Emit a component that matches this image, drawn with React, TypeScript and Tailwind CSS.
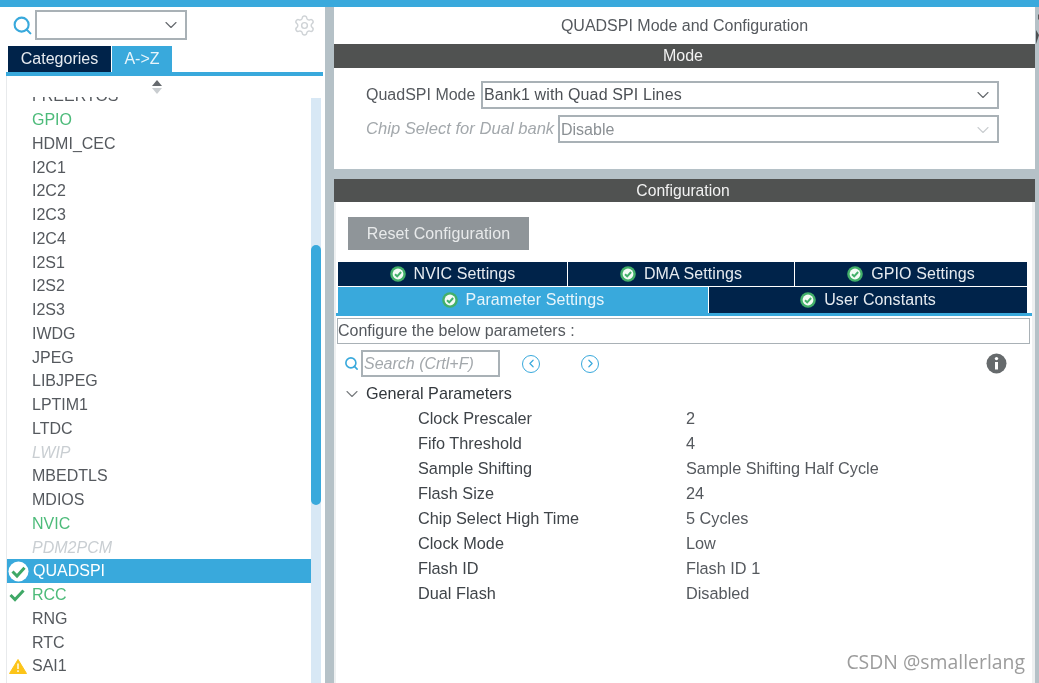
import { ChevronDown, ChevronLeft, ChevronRight, Search, Settings } from "lucide-react";

type Kind = "normal" | "green" | "off" | "selected" | "check" | "warn";
const modules: [string, Kind][] = [
  ["FREERTOS", "normal"], ["GPIO", "green"], ["HDMI_CEC", "normal"], ["I2C1", "normal"], ["I2C2", "normal"],
  ["I2C3", "normal"], ["I2C4", "normal"], ["I2S1", "normal"], ["I2S2", "normal"], ["I2S3", "normal"],
  ["IWDG", "normal"], ["JPEG", "normal"], ["LIBJPEG", "normal"], ["LPTIM1", "normal"], ["LTDC", "normal"],
  ["LWIP", "off"], ["MBEDTLS", "normal"], ["MDIOS", "normal"], ["NVIC", "green"], ["PDM2PCM", "off"],
  ["QUADSPI", "selected"], ["RCC", "check"], ["RNG", "normal"], ["RTC", "normal"], ["SAI1", "warn"], ["SAI2", "off"],
];

const params: [string, string][] = [
  ["Clock Prescaler", "2"], ["Fifo Threshold", "4"], ["Sample Shifting", "Sample Shifting Half Cycle"],
  ["Flash Size", "24"], ["Chip Select High Time", "5 Cycles"], ["Clock Mode", "Low"],
  ["Flash ID", "Flash ID 1"], ["Dual Flash", "Disabled"],
];

function CircleCheck() {
  return (
    <svg width="16" height="16" viewBox="0 0 16 16" className="shrink-0">
      <circle cx="8" cy="8" r="7.8" fill="#43b06a" />
      <circle cx="8" cy="8" r="5.4" fill="#f4fbf6" />
      <path d="M5 8.2 7.2 10.3 11.1 6" fill="none" stroke="#43b06a" strokeWidth="2" />
    </svg>
  );
}

function RowIcon({ kind }: { kind: Kind }) {
  if (kind === "selected")
    return (
      <svg width="21" height="21" viewBox="0 0 21 21" className="ml-[1px]">
        <circle cx="10.5" cy="10.5" r="10" fill="#ffffff" />
        <path d="M4.5 10.5 9 15 16.5 6.8" fill="none" stroke="#3fa866" strokeWidth="3" />
      </svg>
    );
  if (kind === "check")
    return (
      <svg width="16" height="14" viewBox="0 0 16 14" className="ml-[2px]">
        <path d="M1.5 7 6 11.5 14.5 2.5" fill="none" stroke="#3fa866" strokeWidth="3" />
      </svg>
    );
  if (kind === "warn")
    return (
      <svg width="18" height="15" viewBox="0 0 18 15" className="ml-[2px]">
        <path d="M9 0.5 17.5 14.5H0.5Z" fill="#fcc419" stroke="#fcc419" strokeLinejoin="round" />
        <path d="M9 4.5V10M9 11.3V13" stroke="#ffffff" strokeWidth="1.4" />
      </svg>
    );
  return null;
}

const textByKind: Record<Kind, string> = {
  normal: "text-[#55595e]",
  green: "text-[#4dbb7a]",
  off: "text-[#c9ced2] italic",
  selected: "text-white bg-[#39a9dc]",
  check: "text-[#4dbb7a]",
  warn: "text-[#55595e]",
};

function DarkTab({ label, className }: { label: string; className: string }) {
  return (
    <div className={`flex items-center justify-center gap-[8px] bg-[#00234a] text-[#e6ebf0] ${className}`}>
      <CircleCheck />
      <span>{label}</span>
    </div>
  );
}

function Select({ value, muted, className }: { value: string; muted?: boolean; className: string }) {
  return (
    <div className={`flex items-center justify-between border-2 border-[#a9b1b6] pl-[1px] pr-[4px] ${muted ? "text-[#8b9094]" : "text-[#4c5055]"} ${className}`}>
      <span>{value}</span>
      <ChevronDown size={20} strokeWidth={1.3} className={muted ? "text-[#c9cdd0]" : "text-[#666a6e]"} />
    </div>
  );
}

export default function App() {
  return (
    <div className="relative flex h-[683px] w-[1039px] flex-col overflow-hidden bg-[#b5c1c7] text-[16px] blur-[0.4px] [font-family:'Liberation_Sans',Arial,sans-serif]">
      <div className="h-[7px] shrink-0 bg-[#39a9dc]" />
      <div className="flex min-h-0 flex-1">
        {/* Left panel */}
        <aside className="flex w-[325px] shrink-0 flex-col bg-white">
          <div className="mt-[3px] flex h-[30px] shrink-0 items-center pl-[12px] pr-[9px]">
            <Search size={21} strokeWidth={2.4} className="text-[#39a9dc]" />
            <div className="ml-[2px] flex h-[30px] w-[152px] items-center justify-end border-2 border-[#a9b1b6] pr-[4px]">
              <ChevronDown size={20} strokeWidth={1.4} className="text-[#666a6e]" />
            </div>
            <Settings size={23} strokeWidth={1.5} className="ml-auto text-[#cfd3d6]" />
          </div>
          <div className="mt-[6px] flex h-[26px] shrink-0 gap-[1px] pl-[8px]">
            <div className="flex w-[103px] items-center justify-center bg-[#00234a] text-[#e6ebf0]">Categories</div>
            <div className="flex w-[60px] items-center justify-center bg-[#39a9dc] text-[#e8f5fb]">A-&gt;Z</div>
          </div>
          <div className="ml-[6px] mr-[2px] h-[4px] shrink-0 bg-[#39a9dc]" />
          <div className="relative ml-[6px] flex min-h-0 flex-1 flex-col border-l border-[#e8eaec]">
            <div className="flex h-[21px] shrink-0 justify-end pr-[163px] pt-[4px]">
              <svg width="10" height="14" viewBox="0 0 10 14">
                <path d="M5 0 10 6H0Z" fill="#666a6e" />
                <path d="M0 8H10L5 14Z" fill="#c9cdd0" />
              </svg>
            </div>
            <div className="flex min-h-0 flex-1 overflow-hidden pr-[4px]">
              <div className="-mt-[12.6px] min-w-0 flex-1">
                {modules.map(([name, kind]) => (
                  <div key={name} className={`flex h-[23.75px] items-center ${textByKind[kind]}`}>
                    <span className="flex w-[25px] shrink-0 justify-start">
                      <RowIcon kind={kind} />
                    </span>
                    <span className={kind === "selected" ? "ml-[1px]" : ""}>{name}</span>
                  </div>
                ))}
              </div>
              <div className="mt-[1px] w-[10px] shrink-0 bg-[#d8e8f5] pt-[147px]">
                <div className="h-[260px] rounded-t-[5px] rounded-b-[5px] bg-[#39a9dc]" />
              </div>
            </div>
          </div>
        </aside>

        <div className="w-[9px] shrink-0" />

        {/* Right panel */}
        <main className="flex w-[701px] shrink-0 flex-col">
          <div className="flex h-[37px] shrink-0 items-center justify-center bg-white text-[#55595e]">
            QUADSPI Mode and Configuration
          </div>
          <div className="flex h-[24px] shrink-0 items-center justify-center bg-[#505251] pr-[3px] text-[#f2f2f2]">Mode</div>
          <div className="h-[101px] shrink-0 bg-white pt-[13px]">
            <div className="flex h-[28px] items-center pl-[32px]">
              <span className="w-[115px] text-[#55595e]">QuadSPI Mode</span>
              <Select value="Bank1 with Quad SPI Lines" className="h-[28px] w-[518px] tracking-[0.12px]" />
            </div>
            <div className="mt-[6px] flex h-[28px] items-center pl-[32px]">
              <span className="w-[192px] pt-[1px] text-[16.6px] italic text-[#a3a8ac]">Chip Select for Dual bank</span>
              <Select value="Disable" muted className="h-[28px] w-[441px] pt-[1px]" />
            </div>
          </div>
          <div className="h-[10px] shrink-0" />
          <div className="flex h-[23px] shrink-0 items-center justify-center bg-[#505251] pr-[3px] text-[15.7px] text-[#f2f2f2]">Configuration</div>
          <div className="min-h-0 flex-1 border-l-2 border-r-[3px] border-[#eef0f1] bg-white">
            <div className="ml-[12px] mt-[15px] flex h-[33px] w-[181px] items-center justify-center bg-[#8f9599] tracking-[0.1px] text-[#e8eaeb]">
              Reset Configuration
            </div>
            <div className="ml-[2px] mt-[12px] flex h-[24px] w-[689px] gap-[1px] tracking-[0.1px]">
              <DarkTab label="NVIC Settings" className="w-[229px]" />
              <DarkTab label="DMA Settings" className="w-[226px]" />
              <DarkTab label="GPIO Settings" className="flex-1" />
            </div>
            <div className="ml-[2px] mt-[1px] flex h-[26px] w-[689px] gap-[1px] tracking-[0.1px]">
              <div className="flex w-[370px] items-center justify-center gap-[8px] bg-[#39a9dc] text-[#e8f5fb]">
                <CircleCheck />
                <span>Parameter Settings</span>
              </div>
              <DarkTab label="User Constants" className="flex-1" />
            </div>
            <div className="h-[3px] w-[696px] bg-[#39a9dc]" />
            <div className="ml-[1px] mt-[2px] flex h-[26px] w-[693px] items-center border border-[#a9b1b6] text-[#55595e]">
              Configure the below parameters :
            </div>
            <div className="mt-[6px] flex h-[27px] items-center pl-[8px]">
              <Search size={15} strokeWidth={2.6} className="text-[#39a9dc]" />
              <div className="ml-[2px] flex h-[27px] w-[139px] items-center border-2 border-[#a9b1b6] pl-[1px] text-[#a3a8ac] italic">
                Search (Crtl+F)
              </div>
              <span className="ml-[22px] flex h-[18px] w-[18px] items-center justify-center rounded-full border-[1.5px] border-[#39a9dc]">
                <ChevronLeft size={13} strokeWidth={2.2} className="text-[#39a9dc]" />
              </span>
              <span className="ml-[41px] flex h-[18px] w-[18px] items-center justify-center rounded-full border-[1.5px] border-[#39a9dc]">
                <ChevronRight size={13} strokeWidth={2.2} className="text-[#39a9dc]" />
              </span>
              <svg width="21" height="21" viewBox="0 0 21 21" className="ml-[387px]">
                <circle cx="10.5" cy="10.5" r="10" fill="#666a6c" />
                <circle cx="10.5" cy="5.6" r="1.7" fill="#fff" />
                <path d="M10.5 9V16.5" stroke="#fff" strokeWidth="3" />
              </svg>
            </div>
            <div className="mt-[4px] flex h-[25px] items-center pl-[6px] text-[16.2px] text-[#33383d]">
              <ChevronDown size={20} strokeWidth={1.3} className="text-[#777b7e]" />
              <span className="ml-[4px]">General Parameters</span>
            </div>
            {params.map(([label, value]) => (
              <div key={label} className="flex h-[25px] items-center text-[16.3px]">
                <span className="ml-[82px] w-[268px] text-[#3f4449]">{label}</span>
                <span className="text-[#55595e]">{value}</span>
              </div>
            ))}
          </div>
        </main>
      </div>

      <svg width="4" height="40" viewBox="0 0 4 40" className="absolute right-0 top-[12px]">
        <path d="M3 3 4 2V8L3 7Z" fill="#55595a" />
        <path d="M1 18 4 23 1 32Z" fill="#4c5052" />
      </svg>
      <div className="absolute right-[14px] top-[647px] text-[19.4px] text-[#9c9c9c] [font-family:'Open_Sans',sans-serif]">
        CSDN @smallerlang
      </div>
    </div>
  );
}
